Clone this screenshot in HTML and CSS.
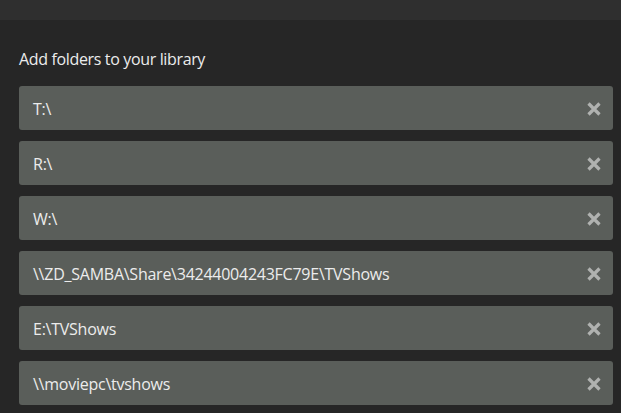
FILE: index.html
```html
<!DOCTYPE html>
<html>
<head>
<meta charset="utf-8">
<link rel="stylesheet" href="styles.css">
</head>
<body>
<div class="topbar"></div>
<main class="panel">
  <h1 class="title">Add folders to your library</h1>
  <ul class="folders">
    <li class="folder"><span class="path">T:\</span><button class="remove" aria-label="Remove"><svg viewBox="0 0 14 14" width="14" height="14"><path d="M1.5 1.5 L12.5 12.5 M12.5 1.5 L1.5 12.5"/></svg></button></li>
    <li class="folder"><span class="path">R:\</span><button class="remove" aria-label="Remove"><svg viewBox="0 0 14 14" width="14" height="14"><path d="M1.5 1.5 L12.5 12.5 M12.5 1.5 L1.5 12.5"/></svg></button></li>
    <li class="folder"><span class="path">W:\</span><button class="remove" aria-label="Remove"><svg viewBox="0 0 14 14" width="14" height="14"><path d="M1.5 1.5 L12.5 12.5 M12.5 1.5 L1.5 12.5"/></svg></button></li>
    <li class="folder"><span class="path">\\ZD_SAMBA\Share\34244004243FC79E\TVShows</span><button class="remove" aria-label="Remove"><svg viewBox="0 0 14 14" width="14" height="14"><path d="M1.5 1.5 L12.5 12.5 M12.5 1.5 L1.5 12.5"/></svg></button></li>
    <li class="folder"><span class="path">E:\TVShows</span><button class="remove" aria-label="Remove"><svg viewBox="0 0 14 14" width="14" height="14"><path d="M1.5 1.5 L12.5 12.5 M12.5 1.5 L1.5 12.5"/></svg></button></li>
    <li class="folder"><span class="path">\\moviepc\tvshows</span><button class="remove" aria-label="Remove"><svg viewBox="0 0 14 14" width="14" height="14"><path d="M1.5 1.5 L12.5 12.5 M12.5 1.5 L1.5 12.5"/></svg></button></li>
  </ul>
</main>
</body>
</html>
```

FILE: styles.css
```css
html, body {
  margin: 0;
  padding: 0;
  background: #262626;
  height: 100%;
  overflow: hidden;
}
body {
  font-family: "Open Sans", "Noto Sans", sans-serif;
  color: #e6e6e6;
}
.topbar {
  height: 20px;
  background: #2f2f2f;
}
.panel {
  padding: 27px 8px 0 19px;
}
.title {
  margin: 0 0 15px 0;
  font-size: 16px;
  letter-spacing: -0.35px;
  font-weight: 400;
  line-height: 24px;
  color: #ececec;
}
.folders {
  list-style: none;
  margin: 0;
  padding: 0;
  display: flex;
  flex-direction: column;
  gap: 11px;
}
.folder {
  height: 44px;
  background: #5a5e5a;
  border-radius: 3px;
  display: flex;
  align-items: center;
  justify-content: space-between;
  padding: 0 12px 0 14px;
}
.path {
  font-size: 16px;
  letter-spacing: -0.25px;
  color: #ececec;
  margin-top: 1px;
}
.remove {
  border: 0;
  background: none;
  padding: 0;
  width: 14px;
  height: 14px;
  display: flex;
  margin-top: 2px;
}
.remove svg {
  stroke: #b0b2b0;
  stroke-width: 3.2;
  fill: none;
}
```
